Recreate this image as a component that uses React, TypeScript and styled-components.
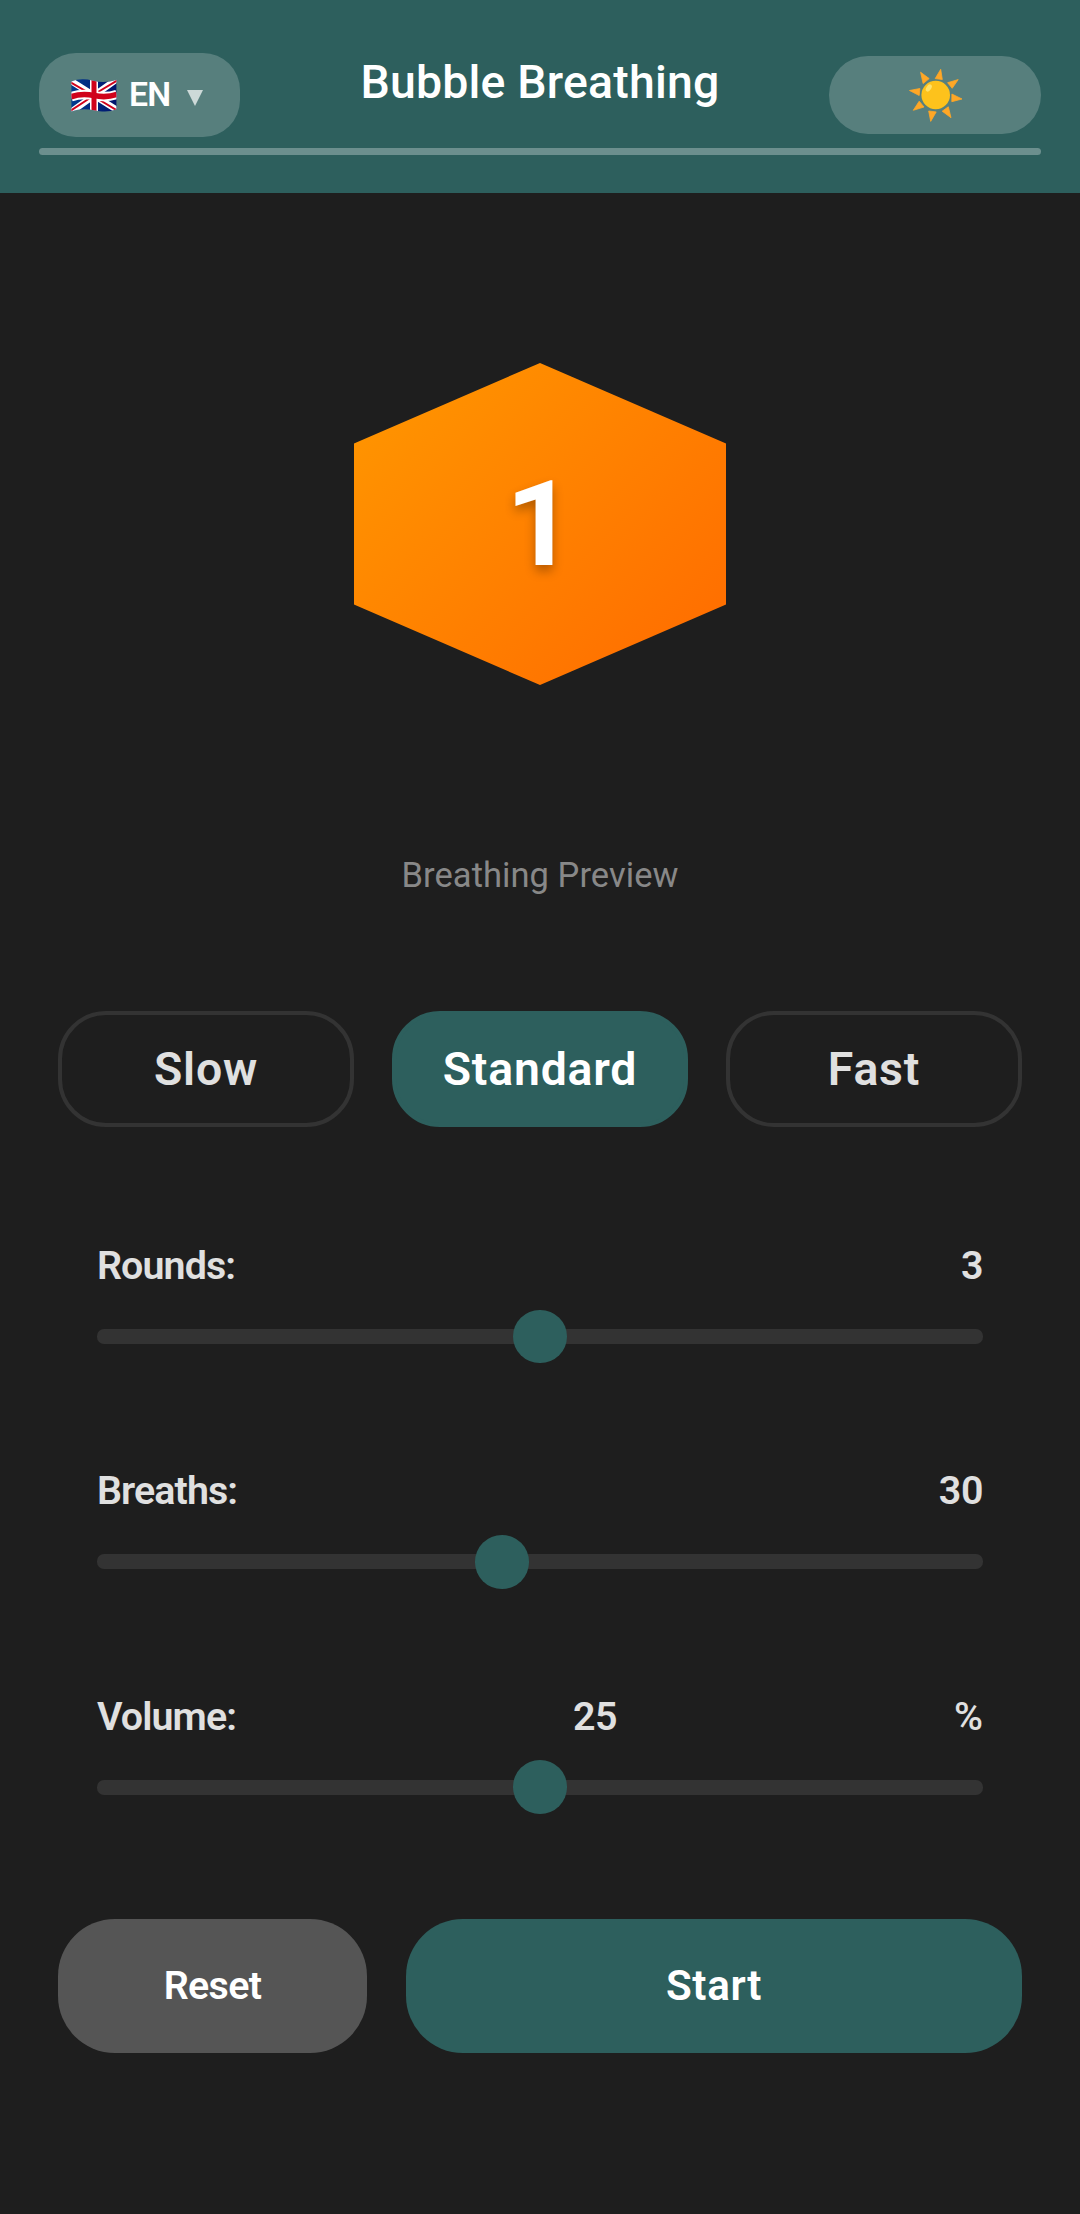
import React, { useState } from "react";
import styled, { createGlobalStyle, css } from "styled-components";

const GlobalStyle = createGlobalStyle`
  *, *::before, *::after { box-sizing: border-box; }
  body {
    margin: 0;
    background: #1e1e1e;
    color: #e0e0e0;
    font-family: Roboto, "Liberation Sans", sans-serif;
  }
  button { font-family: inherit; border: 0; margin: 0; padding: 0; cursor: pointer; }
`;

const Screen = styled.div`
  display: flex;
  flex-direction: column;
  width: 1080px;
  min-height: 2214px;
  background: #1e1e1e;
`;

const Header = styled.header`
  height: 193px;
  padding: 53px 39px 0;
  background: #2d5f5d;
`;

const HeaderRow = styled.div`
  display: grid;
  grid-template-columns: 212px 1fr 212px;
  align-items: center;
  height: 84px;
`;

const LanguageButton = styled.button`
  display: flex;
  align-items: center;
  width: 201px;
  height: 84px;
  padding-left: 32px;
  border-radius: 37px;
  background: rgba(255, 255, 255, 0.2);
  color: #fff;
`;

const LanguageCode = styled.span`
  margin-left: 12px;
  font-size: 33.75px;
  font-weight: 560;
  line-height: 40px;
  letter-spacing: -0.9px;
`;

const Title = styled.h1`
  margin: 0 0 26px;
  font-size: 46.4px;
  font-weight: 500;
  line-height: 54px;
  letter-spacing: 0.2px;
  text-align: center;
  white-space: nowrap;
  color: #fff;
`;

const ThemeButton = styled.button`
  display: flex;
  align-items: center;
  justify-content: center;
  height: 77.5px;
  border-radius: 39px;
  background: rgba(255, 255, 255, 0.2);
`;

const ProgressTrack = styled.div`
  height: 7px;
  margin-top: 11px;
  border-radius: 3.5px;
  background: rgba(255, 255, 255, 0.3);
`;

const Main = styled.main`
  display: flex;
  flex-direction: column;
  padding: 170px 58px 0;
`;

const Hexagon = styled.div`
  display: flex;
  align-items: center;
  justify-content: center;
  align-self: center;
  width: 372px;
  height: 322px;
  padding-top: 2px;
  clip-path: polygon(50% 0%, 100% 25%, 100% 75%, 50% 100%, 0% 75%, 0% 25%);
  background: linear-gradient(135deg, #ff9800, #ff6a00);
`;

const Count = styled.span`
  font-size: 119px;
  font-weight: 700;
  line-height: 140px;
  color: #fff;
  text-shadow: 0 6px 11px rgba(0, 0, 0, 0.3);
`;

const Caption = styled.p`
  margin: 169px 0 0;
  font-size: 34.5px;
  line-height: 42px;
  letter-spacing: 0.05px;
  text-align: center;
  color: #888;
`;

const SpeedRow = styled.div`
  display: grid;
  grid-template-columns: repeat(3, 1fr);
  gap: 38px;
  margin-top: 115px;
`;

const SpeedButton = styled.button<{ $active: boolean }>`
  height: 116px;
  border: 4px solid #333;
  border-radius: 48px;
  background: transparent;
  color: #e0e0e0;
  font-size: 46.4px;
  font-weight: 600;
  letter-spacing: 0.8px;
  ${(p) =>
    p.$active &&
    css`
      border-color: #2d5f5d;
      background: #2d5f5d;
      color: #fff;
    `}
`;

const Settings = styled.section`
  display: flex;
  flex-direction: column;
  gap: 123.3px;
  padding: 116px 39px 0;
`;

const Setting = styled.div`
  display: flex;
  flex-direction: column;
  height: 102px;
`;

const SettingHead = styled.div`
  display: flex;
  justify-content: space-between;
  height: 86px;
  font-size: 39.4px;
  font-weight: 500;
  line-height: 46px;
`;

const SettingLabel = styled.span`
  font-weight: 600;
  letter-spacing: -0.9px;
`;

const SettingValue = styled.span`
  font-weight: 600;
  letter-spacing: -0.4px;
`;

const Range = styled.input`
  appearance: none;
  width: 100%;
  height: 15px;
  margin: 0;
  border-radius: 7px;
  outline: none;
  background: #333;

  &::-webkit-slider-thumb {
    appearance: none;
    width: 54px;
    height: 53.5px;
    border-radius: 50%;
    background: #2d5f5d;
  }
`;

const Actions = styled.div`
  display: flex;
  gap: 39px;
  margin-top: 123.4px;
`;

const ActionButton = styled.button<{ $primary?: boolean }>`
  flex: ${(p) => (p.$primary ? "1" : "0 0 309px")};
  height: 134px;
  border-radius: 57px;
  background: ${(p) => (p.$primary ? "#2d5f5d" : "#555")};
  color: #fff;
  font-size: ${(p) => (p.$primary ? "42.2px" : "39.4px")};
  font-weight: 600;
  letter-spacing: ${(p) => (p.$primary ? "0.6px" : "-0.7px")};
`;

function UnionJack() {
  return (
    <svg width="46" height="33" viewBox="0 0 46 33" aria-hidden="true">
      <defs>
        <clipPath id="flag">
          <path d="M.4 2.6C7-.2 14-.2 22 1.7S38 3.2 45.4.7V30.3C38 33.2 31 32.8 23 31.2S8 29.8.4 32.6Z" />
        </clipPath>
        <linearGradient id="cloth" x1="0" x2="1">
          <stop offset="0" stopColor="#003a8f" />
          <stop offset="1" stopColor="#00136b" />
        </linearGradient>
      </defs>
      <g clipPath="url(#flag)">
        <rect width="46" height="33" fill="url(#cloth)" />
        <path d="M0 2 46 31M46 0 0 33" stroke="#fff" strokeWidth="6.4" />
        <path d="M0 3.5 19 14.5M46 1.5 27 13M46 31.5 27 20M0 31.5 19 19" stroke="#d0021b" strokeWidth="2" />
        <path d="M23-2V35" stroke="#fff" strokeWidth="8" />
        <path d="M0 17.8C8 14.8 15 14.8 23 16.5S38 18.2 46 15.3" fill="none" stroke="#fff" strokeWidth="9.4" />
        <path d="M23-2V35" stroke="#d0021b" strokeWidth="5" />
        <path d="M0 17.8C8 14.8 15 14.8 23 16.5S38 18.2 46 15.3" fill="none" stroke="#d0021b" strokeWidth="5.6" />
      </g>
    </svg>
  );
}

const Caret = styled.svg`
  margin: 6px 0 0 17px;
`;

/* The eight rays are irregular, so each has its own triangle. */
const RAYS = [
  "M31.7 .3 33.3 10.5 26.2 9.6Z",
  "M49.2 10.6 43.2 19.3 38.6 13.7Z",
  "M53 30 42.8 32.7 42.9 25Z",
  "M42 48.7 33.2 42.2 39.3 37.8Z",
  "M21.7 52.4 19.7 42 27.2 42.9Z",
  "M4.3 41.3 10.2 32.2 15 38Z",
  "M.5 21.5 10.9 19.5 10.2 26.5Z",
  "M11.6 3.2 20.2 9.6 14.1 14.6Z",
];

function Sun() {
  return (
    <svg width="53" height="53" viewBox="0 0 53 53" aria-hidden="true">
      {RAYS.map((d) => (
        <path key={d} d={d} fill="#ffa726" stroke="#ffa726" strokeWidth=".8" strokeLinejoin="round" />
      ))}
      <circle cx="26.7" cy="26" r="14.3" fill="#fdc21c" />
      <ellipse cx="19.8" cy="19" rx="2.4" ry="4" transform="rotate(34 19.8 19)" fill="#fee269" />
    </svg>
  );
}

const SPEEDS = ["Slow", "Standard", "Fast"];

type SliderProps = { label: string; initial: number; min: number; max: number; unit?: string };

function SliderSetting({ label, initial, min, max, unit }: SliderProps) {
  const [value, setValue] = useState(initial);
  return (
    <Setting>
      <SettingHead>
        <SettingLabel>{label}</SettingLabel>
        <SettingValue>{value}</SettingValue>
        {unit && <span>{unit}</span>}
      </SettingHead>
      <Range type="range" min={min} max={max} value={value} onChange={(e) => setValue(Number(e.target.value))} />
    </Setting>
  );
}

export default function App() {
  const [speed, setSpeed] = useState("Standard");
  return (
    <Screen>
      <GlobalStyle />
      <Header>
        <HeaderRow>
          <LanguageButton>
            <UnionJack />
            <LanguageCode>EN</LanguageCode>
            <Caret width="16" height="16" viewBox="0 0 16 16" aria-hidden="true">
              <path d="M0 0H16L8 16Z" fill="#fff" fillOpacity=".7" />
            </Caret>
          </LanguageButton>
          <Title>Bubble Breathing</Title>
          <ThemeButton>
            <Sun />
          </ThemeButton>
        </HeaderRow>
        <ProgressTrack />
      </Header>
      <Main>
        <Hexagon>
          <Count>1</Count>
        </Hexagon>
        <Caption>Breathing Preview</Caption>
        <SpeedRow>
          {SPEEDS.map((s) => (
            <SpeedButton key={s} $active={s === speed} onClick={() => setSpeed(s)}>
              {s}
            </SpeedButton>
          ))}
        </SpeedRow>
        <Settings>
          <SliderSetting label="Rounds:" initial={3} min={1} max={5} />
          <SliderSetting label="Breaths:" initial={30} min={5} max={60} />
          <SliderSetting label="Volume:" initial={25} min={0} max={50} unit="%" />
        </Settings>
        <Actions>
          <ActionButton>Reset</ActionButton>
          <ActionButton $primary>Start</ActionButton>
        </Actions>
      </Main>
    </Screen>
  );
}
